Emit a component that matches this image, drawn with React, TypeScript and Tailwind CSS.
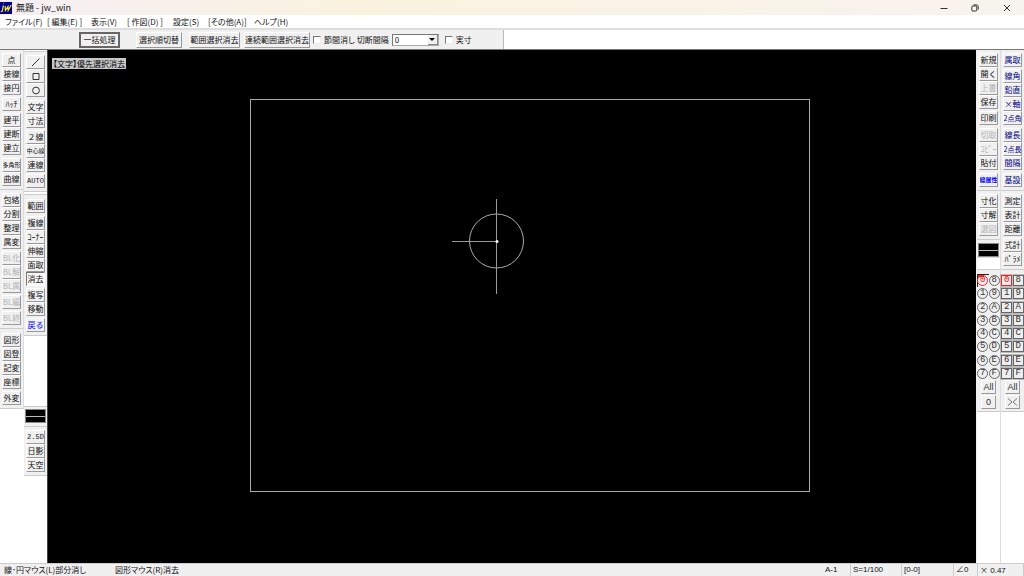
import { clsx } from 'clsx'
import { useState, type ReactNode } from 'react'

type Tool = {
  label: string
  icon?: ReactNode
  gap?: boolean
  wideGap?: boolean
  disabled?: boolean
  pressed?: boolean
  className?: string
}

const menus = [
  { label: 'ファイル(F)', width: 'w-[42px]' },
  { label: '[ 編集(E) ]', width: 'w-[44px]' },
  { label: '表示(V)', width: 'w-9' },
  { label: '[ 作図(D) ]', width: 'w-[46px]' },
  { label: '設定(S)', width: 'w-[35px]' },
  { label: '[その他(A)]', width: 'w-[46px]' },
  { label: 'ヘルプ(H)', width: 'w-10' },
]

const drawTools: Tool[] = [
  { label: '点' },
  { label: '接線' },
  { label: '接円' },
  { label: 'ﾊｯﾁ', gap: true },
  { label: '建平', gap: true },
  { label: '建断' },
  { label: '建立' },
  { label: '多角形', wideGap: true, className: 'text-[6px]' },
  { label: '曲線' },
]

const editTools: Tool[] = [
  { label: '包絡' },
  { label: '分割' },
  { label: '整理' },
  { label: '属変' },
  { label: 'BL化', gap: true, disabled: true },
  { label: 'BL解', disabled: true },
  { label: 'BL属', disabled: true },
  { label: 'BL編', gap: true, disabled: true },
  { label: 'BL終', gap: true, disabled: true },
]

const figureTools: Tool[] = [
  { label: '図形' },
  { label: '図登' },
  { label: '記変' },
  { label: '座標' },
  { label: '外変', gap: true },
]

const shapeTools: Tool[] = [
  { label: '線', icon: <path d="M1 8 8.5.5" /> },
  { label: '矩形', icon: <path d="M2 1.5h6v6H2z" /> },
  { label: '円', icon: <circle cx="5" cy="4.5" r="3.4" /> },
  { label: '文字', wideGap: true },
  { label: '寸法' },
  { label: '２線', gap: true },
  { label: '中心線', className: 'text-[6px]' },
  { label: '連線' },
  { label: 'AUTO', gap: true, className: "font-['Liberation_Mono',monospace] text-[7px]" },
]

const modifyTools: Tool[] = [
  { label: '範囲' },
  { label: '複線', wideGap: true },
  { label: 'ｺｰﾅｰ' },
  { label: '伸縮' },
  { label: '面取' },
  { label: '消去', pressed: true },
  { label: '複写', gap: true },
  { label: '移動' },
  { label: '戻る', gap: true, className: 'text-[#0000ff]' },
]

const viewTools: Tool[] = [
  { label: '2.5D', className: "font-['Liberation_Mono',monospace] text-[7px]" },
  { label: '日影' },
  { label: '天空' },
]

const fileTools: Tool[] = [
  { label: '新規' },
  { label: '開く' },
  { label: '上書', disabled: true },
  { label: '保存' },
  { label: '印刷', gap: true },
  { label: '切取', wideGap: true, disabled: true },
  { label: 'ｺﾋﾟｰ', disabled: true },
  { label: '貼付' },
  { label: '線属性', wideGap: true, className: 'text-[6px] font-bold text-[#0000ff]' },
]

const dimTools: Tool[] = [
  { label: '寸化' },
  { label: '寸解' },
  { label: '選図', disabled: true },
]

const snapTools: Tool[] = [
  { label: '属取', className: 'text-[#000080]' },
  { label: '線角', gap: true, className: 'text-[#000080]' },
  { label: '鉛直', className: 'text-[#000080]' },
  { label: '×軸', className: 'text-[#000080]' },
  { label: '2点角', className: 'text-[7px] text-[#000080]' },
  { label: '線長', wideGap: true, className: 'text-[#000080]' },
  { label: '2点長', className: 'text-[7px] text-[#000080]' },
  { label: '間隔', className: 'text-[#000080]' },
  { label: '基設', wideGap: true, className: 'text-[#000080]' },
]

const measureTools: Tool[] = [
  { label: '測定' },
  { label: '表計' },
  { label: '距離' },
  { label: '式計', gap: true },
  { label: 'ﾊﾟﾗﾒ' },
]

const layers = ['0', '8', '1', '9', '2', 'A', '3', 'B', '4', 'C', '5', 'D', '6', 'E', '7', 'F']

function ToolButton({ label, icon, gap, wideGap, disabled, pressed, className }: Tool) {
  return (
    <button
      type="button"
      disabled={disabled}
      aria-label={icon ? label : undefined}
      aria-pressed={pressed}
      className={clsx(
        'flex h-[14px] w-full shrink-0 items-center justify-center overflow-hidden whitespace-nowrap border leading-none',
        pressed
          ? 'border-t-[#777] border-r-white border-b-white border-l-[#777] bg-[#f8f8f8]'
          : 'border-t-white border-r-[#999] border-b-[#999] border-l-white bg-[#f0f0f0]',
        gap && 'mt-0.5',
        wideGap && 'mt-[3px]',
        disabled && 'text-[#b4b4b4]',
        className,
      )}
    >
      {icon ? (
        <svg viewBox="0 0 10 9" className="h-[9px] w-2.5" fill="none" stroke="#333" aria-hidden="true">
          {icon}
        </svg>
      ) : (
        label
      )}
    </button>
  )
}

function Palette({ tools, className }: { tools: Tool[]; className?: string }) {
  return (
    <div className={clsx('flex flex-col border-b border-[#ccc] bg-[#f0f0f0] px-0.5 pb-[3px]', className)}>
      {tools.map((tool) => (
        <ToolButton key={tool.label} {...tool} />
      ))}
    </div>
  )
}

// Current line colour and line type
function LineSample({ className }: { className?: string }) {
  return (
    <div className={clsx('bg-[#f0f0f0] px-px', className)}>
      <button
        type="button"
        aria-label="線属性"
        className="flex h-[14px] w-full items-center border border-[#888] bg-black"
      >
        <span className="h-px w-full bg-[#bbb]" />
      </button>
    </div>
  )
}

function LayerGrid({ name, round, toggle }: { name: string; round?: boolean; toggle: ReactNode }) {
  const [current, setCurrent] = useState('0')
  const small =
    'flex h-[14px] w-[15px] items-center justify-center border border-t-white border-r-[#999] border-b-[#999] border-l-white'
  return (
    <div className="border-b border-[#ccc] bg-[#f0f0f0] pb-0.5">
      <div className="grid h-[106px] grid-cols-2 grid-rows-8">
        {layers.map((layer) => (
          <button
            key={layer}
            type="button"
            aria-label={`${name} ${layer}`}
            onClick={() => setCurrent(layer)}
            className="relative flex items-center justify-center"
          >
            {layer === current && (
              <span className="absolute inset-0 border-t border-l border-[#222]">
                <span className="absolute top-0 left-0 h-0.5 w-1.5 bg-[#e33]" />
              </span>
            )}
            <span
              className={clsx(
                "relative flex size-[11px] shrink-0 items-center justify-center border font-['Liberation_Mono',monospace] text-[9px] leading-none",
                round ? 'rounded-full' : 'bg-[#eee] shadow-[0_0_0_1px_#bbb]',
                layer === current ? 'border-[#ff2020] text-[#e00]' : 'border-[#666] text-[#333]',
              )}
            >
              {layer}
            </span>
          </button>
        ))}
      </div>
      <div className="flex flex-col items-center font-['Liberation_Sans',sans-serif] text-[9px] leading-none text-[#333]">
        <button type="button" className={small}>
          All
        </button>
        <button type="button" aria-label={`${name} 切替`} className={clsx(small, 'mt-px')}>
          {toggle}
        </button>
      </div>
    </div>
  )
}

function TitleBar() {
  return (
    <header className="flex h-[15px] shrink-0 items-center bg-linear-to-r from-[#f5eff4] via-[#faf2df] via-35% to-[#f7f3ee]">
      <svg viewBox="0 0 12 12" className="size-3" aria-hidden="true">
        <rect width="12" height="12" fill="#000090" />
        <path d="M3.4 3.4 2.4 8.6Q2.2 9.8.8 9.6M3.7 1.5v.6M5.2 4l.2 4.4L8 4.6l.2 3.8L11.2 3" fill="none" stroke="#f4ee20" strokeWidth="1.2" />
      </svg>
      <h1 className="ml-1 text-[9px] text-[#222] [font-feature-settings:'palt']">無題 - jw_win</h1>
      <div className="ml-auto flex h-full text-[#333]">
        <button type="button" aria-label="最小化" className="flex w-[31px] items-center justify-center">
          <svg viewBox="0 0 8 8" className="size-2" fill="none" stroke="currentColor">
            <path d="M.5 4.5h7" />
          </svg>
        </button>
        <button type="button" aria-label="元に戻す" className="flex w-[31px] items-center justify-center">
          <svg viewBox="0 0 8 8" className="size-2" fill="none" stroke="currentColor">
            <rect x=".8" y="2" width="5" height="5" rx="1" />
            <path d="M2.5.9h3a1.7 1.7 0 0 1 1.7 1.7v3" />
          </svg>
        </button>
        <button type="button" aria-label="閉じる" className="flex w-[34px] items-center justify-center">
          <svg viewBox="0 0 8 8" className="size-2" fill="none" stroke="currentColor">
            <path d="m1 1 6 6M7 1 1 7" />
          </svg>
        </button>
      </div>
    </header>
  )
}

function ControlBar() {
  const button =
    'flex h-4 items-center justify-center whitespace-nowrap border border-t-white border-r-[#999] border-b-[#999] border-l-white'
  const checkbox = 'size-2 shrink-0 appearance-none border border-t-[#777] border-r-[#eee] border-b-[#eee] border-l-[#777] bg-white checked:bg-[#333]'
  return (
    <div className="flex h-5 shrink-0 border-b border-[#777] bg-white">
      <div className="flex items-center border-r border-[#bbb] bg-[#f0f0f0] pr-[31px] pl-[79px]">
        <button type="button" className="flex h-4 w-[41px] items-center justify-center whitespace-nowrap border-2 border-double border-[#666]">
          一括処理
        </button>
        <button type="button" className={clsx(button, 'ml-4 w-[46px]')}>選択順切替</button>
        <button type="button" className={clsx(button, 'ml-[7px] w-[51px]')}>範囲選択消去</button>
        <button type="button" className={clsx(button, 'ml-1 w-[66px]')}>連続範囲選択消去</button>
        <label className="ml-[3px] flex items-center gap-[3px] whitespace-nowrap [font-feature-settings:'palt']">
          <input type="checkbox" className={checkbox} />
          節間消し
        </label>
        <label htmlFor="cut-gap" className="ml-0.5 whitespace-nowrap">切断間隔</label>
        <div className="relative ml-[3px] h-3 w-[47px]">
          <select
            id="cut-gap"
            className="block h-full w-full appearance-none border border-t-[#777] border-r-[#aaa] border-b-[#aaa] border-l-[#777] bg-white pl-0.5 leading-none"
          >
            <option>0</option>
          </select>
          <span className="pointer-events-none absolute top-px right-px flex h-2.5 w-2.5 items-center justify-center border-r border-b border-[#888] bg-[#f0f0f0]">
            <svg viewBox="0 0 6 3" className="h-[3px] w-1.5">
              <path d="M0 0h6L3 3z" />
            </svg>
          </span>
        </div>
        <label className="ml-1.5 flex items-center gap-[3px] whitespace-nowrap">
          <input type="checkbox" className={checkbox} />
          実寸
        </label>
      </div>
    </div>
  )
}

function DrawingArea() {
  return (
    <main className="relative min-w-0 flex-1 overflow-hidden border-l border-[#444] bg-black">
      <svg viewBox="0 0 928 513" className="size-full" fill="none" stroke="#aaa">
        <rect x="202.5" y="49.5" width="559" height="392" />
        <circle cx="448.5" cy="191" r="27" />
        <path d="M448.5 149v95M404 191.5h45" stroke="#999" />
        <circle cx="449" cy="191.5" r="1.5" fill="#fff" stroke="none" />
      </svg>
      <p className="absolute top-2 left-1 bg-[#c8c8c8] px-px text-[8px] leading-[11px] text-black [font-feature-settings:'palt']">
        【文字】優先選択消去
      </p>
    </main>
  )
}

export default function App() {
  return (
    <div className="flex h-screen flex-col overflow-hidden bg-white font-['Noto_Sans_CJK_JP',sans-serif] text-[8px] leading-none text-[#111]">
      <TitleBar />

      <nav className="flex h-[15px] shrink-0 border-b-2 border-[#ddd] bg-white pl-[5px] [font-feature-settings:'palt']">
        {menus.map((menu) => (
          <button key={menu.label} type="button" className={clsx('whitespace-nowrap text-left', menu.width)}>
            {menu.label}
          </button>
        ))}
      </nav>

      <ControlBar />

      <div className="flex min-h-0 flex-1">
        {/* Left tool bars */}
        <aside className="flex shrink-0">
          <div className="w-6">
            <div className="border-r border-[#ddd]">
              <Palette tools={drawTools} className="pt-[3px]" />
              <Palette tools={editTools} className="pt-[3px]" />
              <Palette tools={figureTools} className="pt-1" />
            </div>
          </div>
          <div className="w-[23px]">
            <div className="h-0.5 border-b border-[#ccc]" />
            <Palette tools={shapeTools} className="pt-[3px]" />
            <div className="h-[3px] border-b border-[#ccc]" />
            <Palette tools={modifyTools} className="pt-1" />
            <div className="h-[71px] border-b border-[#ccc]" />
            <LineSample className="border-b border-[#ccc] pt-0.5 pb-[3px]" />
            <Palette tools={viewTools} className="pt-[3px]" />
          </div>
        </aside>

        <DrawingArea />

        {/* Right tool bars */}
        <aside className="flex shrink-0">
          <div className="w-[25px] border-r border-[#ddd] bg-[#f0f0f0] pl-px">
            <Palette tools={fileTools} className="pt-[3px]" />
            <Palette tools={dimTools} className="pt-[3px]" />
            <LineSample className="pt-[3px]" />
            <div className="h-3 border-t border-[#ddd] bg-white" />
            <div className="h-[5px] border-t border-[#ccc]" />
            <LayerGrid name="レイヤ" round toggle="0" />
            <div className="h-full bg-white" />
          </div>
          <div className="w-[23px]">
            <Palette tools={snapTools} className="pt-[3px]" />
            <Palette tools={measureTools} className="pt-[3px]" />
            <div className="h-1 bg-[#f0f0f0]" />
            <LayerGrid
              name="レイヤグループ"
              toggle={
                <svg viewBox="0 0 11 8" className="h-2 w-[11px]" fill="none" stroke="#777">
                  <path d="m1 .5 4 3.5-4 3.5M10 .5 6 4l4 3.5" />
                </svg>
              }
            />
          </div>
        </aside>
      </div>

      <footer className="flex h-[13px] shrink-0 items-center border-t border-[#ccc] bg-[#f0f0f0] pl-1 [font-feature-settings:'palt']">
        <span className="w-[111px] whitespace-nowrap">線･円マウス(L)部分消し</span>
        <span className="whitespace-nowrap">図形マウス(R)消去</span>
        <div className="ml-auto flex h-full font-['Liberation_Sans','Noto_Sans_CJK_JP',sans-serif] leading-3">
          <button type="button" className="w-[26px] border-r border-[#ccc] text-left">A-1</button>
          <button type="button" className="w-[51px] border-r border-[#ccc] pl-0.5 text-left">S=1/100</button>
          <button type="button" className="w-[52px] border-r border-[#ccc] pl-0.5 text-left">[0-0]</button>
          <button type="button" className="w-6 border-r border-[#ccc] pl-0.5 text-left">∠0</button>
          <button type="button" className="w-[46px] border-r border-[#ccc] pl-0.5 text-left">
            <span className="font-['Noto_Sans_CJK_JP',sans-serif]">×</span> 0.47
          </button>
        </div>
      </footer>
    </div>
  )
}
